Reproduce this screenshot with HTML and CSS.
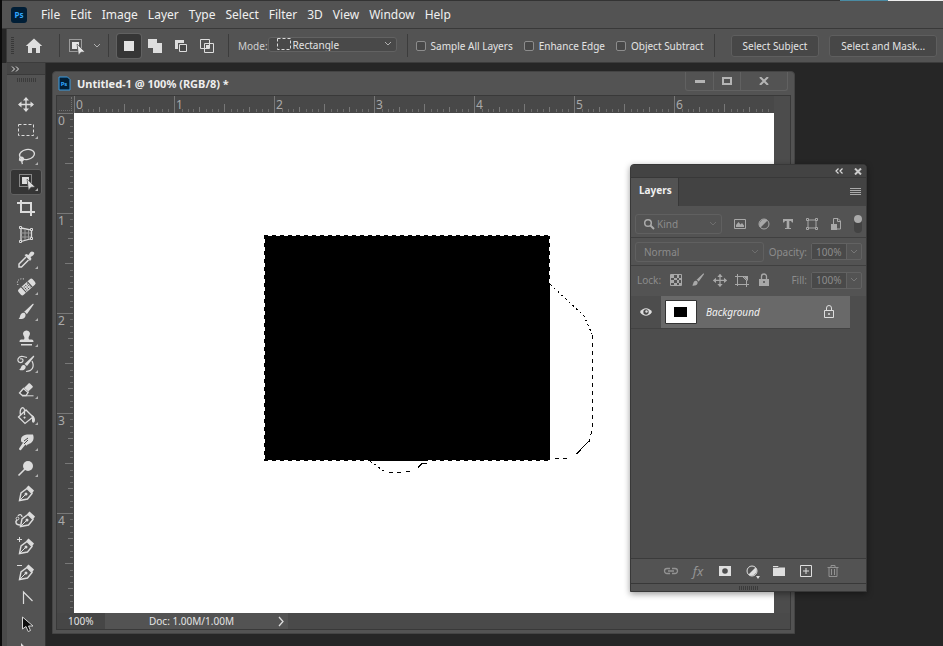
FILE: index.html
```html
<!DOCTYPE html>
<html lang="en">
<head>
<meta charset="utf-8">
<title>Untitled-1 @ 100% (RGB/8) *</title>
<link rel="stylesheet" href="styles.css">
</head>
<body>
<svg class="defs" aria-hidden="true">
  <defs>
    <symbol id="chev" viewBox="0 0 8 6"><path d="M1 1l3 3 3-3" fill="none" stroke="currentColor"/></symbol>
    <symbol id="objsel" viewBox="0 0 20 20">
      <path d="M2.500 3.500h12v12h-12z" fill="none" stroke="currentColor" stroke-dasharray="1 1"/>
      <path d="M5 6h7v5l-2-1v3H5z" fill="currentColor"/>
      <path d="M10 8l8 8-4 .2-2.500 3z" fill="currentColor" stroke="#484848" stroke-width=".6"/>
    </symbol>
    <symbol id="pen" viewBox="0 0 24 24">
      <path d="M5.500 18.500L7 11l6-4.500 5 5-4.500 5.500z" fill="none" stroke="currentColor" stroke-width="1.400"/>
      <path d="M12.500 5.500l2-2 5.500 5-2 3z" fill="currentColor"/>
      <path d="M5.500 18.500l6-6" stroke="currentColor"/><circle cx="12" cy="12" r="1.500" fill="currentColor"/>
    </symbol>
    <symbol id="brush" viewBox="0 0 24 24">
      <path d="M4.500 19c2-1 1-5 4-6 2-.6 3.500.8 3 3-.7 2.700-4 3.400-7 3z" fill="currentColor"/>
      <path d="M10 12l8.500-8c.8-.6 1.500 0 1 .8L12.800 14.200c-.5-1.200-1.500-2-2.800-2.200z" fill="currentColor"/>
    </symbol>
    <symbol id="move" viewBox="0 0 24 24">
      <path d="M12 6v13M5 12.500h14" stroke="currentColor" stroke-width="1.400"/>
      <path d="M12 5l3 3.500H9zM12 20l3-3.500H9zM4 12.500l3.500-3v6zM20 12.500l-3.500-3v6z" fill="currentColor"/>
    </symbol>
    <symbol id="ps" viewBox="0 0 16 16"><rect width="16" height="16" rx="3" fill="#001e36"/><text x="8" y="11" text-anchor="middle" class="ps-text">Ps</text></symbol>
  </defs>
</svg>

<div class="app">
  <header class="menubar">
    <svg class="ps-logo" aria-hidden="true"><use href="#ps"/></svg>
    <nav class="menus" aria-label="Main menu">
      <button>File</button><button>Edit</button><button>Image</button><button>Layer</button><button>Type</button><button>Select</button><button>Filter</button><button>3D</button><button>View</button><button>Window</button><button>Help</button>
    </nav>
    <span class="window-strip"></span>
  </header>

  <section class="options" aria-label="Tool options">
    <span class="grip-v"></span>
    <button class="home" aria-label="Home"><svg width="18" height="16" viewBox="0 0 18 16"><path d="M9 .5L.8 8H3v7h4v-5h4v5h4V8h2.200z" fill="#dedede"/></svg></button>
    <span class="sep"></span>
    <button class="preset" aria-label="Object selection presets"><svg width="20" height="20"><use href="#objsel"/></svg><svg class="preset-chev" width="8" height="6"><use href="#chev"/></svg></button>
    <span class="sep"></span>
    <div class="modes">
      <button class="mode on" aria-label="New selection"><svg width="16" height="16"><path d="M3 3h10v10H3z" fill="#e2e2e2"/></svg></button>
      <button class="mode" aria-label="Add to selection"><svg width="16" height="16"><path d="M1 1h9v4h5v10H6v-5H1z" fill="#dedede"/></svg></button>
      <button class="mode" aria-label="Subtract from selection"><svg width="16" height="16"><path d="M2 2h9v3H5v6H2z" fill="#dedede"/><path d="M6.500 6.500h7v7h-7z" fill="#484848" stroke="#dedede"/></svg></button>
      <button class="mode" aria-label="Intersect with selection"><svg width="16" height="16"><path d="M1.500 1.500h9v9h-9zM5.500 5.500h9v9h-9z" fill="none" stroke="#dedede"/><path d="M7 7h3v3H7z" fill="#dedede"/></svg></button>
    </div>
    <span class="sep"></span>
    <label class="mode-label" for="mode">Mode:</label>
    <span class="select shape-select">
      <svg class="shape-icon" width="16" height="14"><path d="M1.500 1.500h13v11h-13z" fill="none" stroke="#dcdcdc" stroke-dasharray="3 2"/></svg>
      <select id="mode"><option>Rectangle</option><option>Lasso</option></select>
      <svg class="select-chev" width="8" height="6"><use href="#chev"/></svg>
    </span>
    <span class="sep"></span>
    <div class="checks">
      <label><input type="checkbox">Sample All Layers</label>
      <label><input type="checkbox">Enhance Edge</label>
      <label><input type="checkbox">Object Subtract</label>
    </div>
    <span class="sep"></span>
    <div class="actions"><button>Select Subject</button><button>Select and Mask...</button></div>
  </section>

  <div class="work">
    <aside class="toolbar" aria-label="Tools">
      <button class="expand" aria-label="Expand tools"><svg width="9" height="6"><path d="M1 .5L3.500 3 1 5.500M5 .5L7.500 3 5 5.500" fill="none" stroke="#e0e0e0"/></svg></button>
      <div class="grip-row"><span class="grip-h"></span></div>
      <div class="tools">
        <button aria-label="Move"><svg><use href="#move"/></svg></button>
        <button class="more" aria-label="Rectangular marquee"><svg viewBox="0 0 24 24"><path d="M4.500 6.500h15v11h-15z" fill="none" stroke="currentColor" stroke-dasharray="3 2"/></svg></button>
        <button class="more" aria-label="Lasso"><svg viewBox="0 0 24 24"><g fill="none" stroke="currentColor" stroke-width="1.400"><ellipse cx="13" cy="10.500" rx="7.500" ry="5" transform="rotate(-10 13 10.500)"/><circle cx="7.500" cy="15" r="1.800"/><path d="M7.500 14c2 2-1 3 1 6M5 15.500c1.500.5 3 .5 4.500-.5"/></g></svg></button>
        <button class="more active" aria-label="Object selection"><svg viewBox="-3 -1 24 24"><use href="#objsel" width="20" height="20"/></svg></button>
        <button aria-label="Crop"><svg viewBox="0 0 24 24"><path d="M3 7h14v13M7 4v12h14" fill="none" stroke="currentColor" stroke-width="2"/></svg></button>
        <button aria-label="Perspective crop"><svg viewBox="0 0 24 24"><path d="M7 6l10.500 2v8.500L7 19.500z" fill="none" stroke="currentColor" stroke-width="1.300"/><path d="M11 7v11M14.500 8v9M7 11h10M7 15h10" fill="none" stroke="#9a9a9a"/><path d="M5.500 4.500h2v2h-2zM16.500 6.500h2v2h-2zM16.500 15.500h2v2h-2zM5.500 18.500h2v2h-2z" fill="#505050" stroke="currentColor"/></svg></button>
        <button class="more" aria-label="Eyedropper"><svg viewBox="0 0 24 24"><path d="M12 9l-7 7v3h2.500l7-7" fill="none" stroke="currentColor" stroke-width="1.500"/><path d="M10.500 7l2-1 2 1c2-4 3.500-4 5-3s1 3-3 5l1 2-1.500 2z" fill="currentColor"/></svg></button>
        <button class="more" aria-label="Spot healing brush"><svg viewBox="0 0 24 24"><g transform="rotate(-42 13 12.500)"><rect x="3" y="9" width="19" height="7.500" rx="2" fill="currentColor"/><path d="M8.500 9v7.500M16.500 9v7.500" stroke="#484848"/><path d="M10 11h5.500M10 13h5.500M10 15h5.500" stroke="#484848" stroke-width="1.100" stroke-dasharray="1.100 1.100"/></g><path d="M4 11C2 7 5 4 10 5" fill="none" stroke="currentColor" stroke-dasharray="1 1.500"/></svg></button>
        <button class="more" aria-label="Brush"><svg><use href="#brush"/></svg></button>
        <button class="more" aria-label="Clone stamp"><svg viewBox="0 0 24 24"><path d="M12.500 4.500a3.300 3.300 0 0 1 3 5c-1 1.500-1.200 2.500-.5 4h2.500c1.300 0 2 .8 2 2.500h-14c0-1.700.7-2.500 2-2.500H10c.8-1.500.4-2.500-.5-4a3.300 3.300 0 0 1 3-5zM7 18h11v1.500H7z" fill="currentColor"/></svg></button>
        <button class="more" aria-label="History brush"><svg viewBox="0 0 24 24"><path d="M5 17.500c2.500-.5 1.500-3.500 4-4.500 1.800-.4 3.300 1 2.500 3-1 2.500-4 3-6.500 1.500zM10.500 12l8.500-8c1.200-.5 1.500.5 1 1l-7 9z" fill="currentColor"/><path d="M9 4.500c-5-1-7 5-3 6 4 .5 4-5 0-3.500M18 9c3 6 0 10-6 10.500M9 4.500l4 1" fill="none" stroke="currentColor" stroke-width="1.200"/></svg></button>
        <button class="more" aria-label="Eraser"><svg viewBox="0 0 24 24"><path d="M10 17.500l8.500-8c.5-.5.500-1 0-1.500L16 5.500c-.5-.5-1-.5-1.500 0L10 10l5 4z" fill="currentColor"/><path d="M9.500 10.500l4.500 4-2 3H8.500L5.500 15z" fill="#484848" stroke="currentColor" stroke-width="1.300"/><path d="M8 17.800h11.500" stroke="currentColor"/></svg></button>
        <button class="more" aria-label="Paint bucket"><svg viewBox="0 0 24 24"><path d="M4.500 13l7.500-7 7 7-8 6.500zM6.500 11.500C5 3 10 2 10.500 6v5" fill="none" stroke="currentColor" stroke-width="1.300"/><path d="M10.500 12.500a1 1 0 1 0 .1 0M17 10.500l2.500 1.500c1.500 2 2 4 1 6-1 1.500-2.500.5-2.500-1v-4z" fill="currentColor"/></svg></button>
        <button class="more" aria-label="Smudge"><svg viewBox="0 0 24 24"><path d="M7 10c0-4 3-5 6-5.500h6c1.500 4 0 7-2 8.500-1 1-4 1-4.500 3l-1-1.500L7 20c-1 .8-2.500-.5-1.800-1.700L9.500 12c-1.500 1-2.500 0-2.500-2z" fill="currentColor"/><path d="M10 11l4-3M10 14l4-4" stroke="#484848"/></svg></button>
        <button class="more" aria-label="Dodge"><svg viewBox="0 0 24 24"><circle cx="14" cy="10" r="5" fill="currentColor"/><path d="M4.500 19.500l7-7" stroke="currentColor" stroke-width="1.600"/></svg></button>
        <button aria-label="Pen"><svg><use href="#pen"/></svg></button>
        <button aria-label="Curvature pen"><svg viewBox="0 0 24 24"><use href="#pen" x="1" width="24" height="24"/><path d="M6 17c-5 0-5-4-2-6M4 8c1-2 4-2 4 1" fill="none" stroke="currentColor" stroke-width="1.300"/><circle cx="3.500" cy="10.500" r="1.400" fill="#484848" stroke="currentColor"/></svg></button>
        <button aria-label="Add anchor point"><svg viewBox="0 0 24 24"><use href="#pen" y="1" width="24" height="24"/><path d="M3 5.500h5M5.500 3v5" stroke="currentColor"/></svg></button>
        <button aria-label="Delete anchor point"><svg viewBox="0 0 24 24"><use href="#pen" y="1" width="24" height="24"/><path d="M3 5.500h5" stroke="currentColor"/></svg></button>
        <button aria-label="Convert point"><svg viewBox="0 0 24 24"><path d="M9.500 18V6l9 9" fill="none" stroke="currentColor" stroke-width="1.200"/></svg></button>
        <button aria-label="Path selection"><svg viewBox="0 0 24 24"><path d="M8.500 5v12l3.500-2.500 2.200 5 2.300-1-2-4.500h4.500z" fill="#0c0c0c" stroke="#d6d6d6"/></svg></button>
        <button aria-label="Direct selection"><svg viewBox="0 0 24 24"><path d="M7 5v12l3.500-3h5z" fill="currentColor"/></svg></button>
      </div>
    </aside>

    <main class="desktop">
      <article class="doc">
        <header class="titlebar">
          <svg class="doc-icon" width="13" height="15" viewBox="0 0 13 15" aria-hidden="true"><path d="M1 1h8.500L12 3.500V14H1z" fill="#001e36" stroke="#3a9be0"/><text x="6" y="10" text-anchor="middle" class="ps-text small">Ps</text></svg>
          <h1>Untitled-1 @ 100% (RGB/8) *</h1>
          <div class="controls">
            <button aria-label="Minimize"><svg width="10" height="4"><path d="M0 1h10v3H0z" fill="#b4b4b4"/></svg></button>
            <button aria-label="Maximize"><svg width="10" height="8"><path d="M1 1h8v6H1z" fill="none" stroke="#b4b4b4" stroke-width="2"/></svg></button>
            <button class="close" aria-label="Close"><svg width="10" height="8"><path d="M1 0l8 8M9 0L1 8" stroke="#b4b4b4" stroke-width="2"/></svg></button>
          </div>
        </header>
        <div class="view">
          <div class="corner"></div>
          <div class="ruler-x">
            <svg aria-hidden="true"><defs><pattern id="tx" width="100" height="17" patternUnits="userSpaceOnUse"><path d="M.5 0v17" stroke="#777"/><path d="M50.500 8v8" stroke="#777"/><path d="M25.500 11v5M75.500 11v5" stroke="#777"/><path d="M8.500 13v3M14.500 13v3M19.500 13v3M32.500 13v3M38.500 13v3M44.500 13v3M57.500 13v3M63.500 13v3M69.500 13v3M82.500 13v3M88.500 13v3M94.500 13v3" stroke="#6c6c6c"/></pattern></defs><rect width="700" height="17" fill="url(#tx)"/></svg>
            <span>0</span><span>1</span><span>2</span><span>3</span><span>4</span><span>5</span><span>6</span>
          </div>
          <div class="scroll"></div>
          <div class="ruler-y">
            <svg aria-hidden="true"><defs><pattern id="ty" width="17" height="100" patternUnits="userSpaceOnUse"><path d="M0 .5h16" stroke="#777"/><path d="M8 50.500h8" stroke="#777"/><path d="M11 25.500h5M11 75.500h5" stroke="#777"/><path d="M13 6.500h3M13 13.500h3M13 19.500h3M13 32.500h3M13 38.500h3M13 44.500h3M13 57.500h3M13 63.500h3M13 69.500h3M13 82.500h3M13 88.500h3M13 94.500h3" stroke="#6c6c6c"/></pattern></defs><rect width="17" height="500" fill="url(#ty)"/></svg>
            <span>0</span><span>1</span><span>2</span><span>3</span><span>4</span>
          </div>
          <svg class="canvas" width="700" height="500" viewBox="0 0 700 500" role="img" aria-label="Black rectangle with selection">
            <path d="M190 122h286v226H190z" fill="#000"/>
            <g fill="none" shape-rendering="crispEdges" stroke="#fff" stroke-dasharray="4 4">
              <path d="M194 122.500h282M190.500 126v221M475.500 126v45M194 347.500h102M354 347.500h122"/>
            </g>
            <g fill="none" shape-rendering="crispEdges" stroke="#000">
              <path d="M476.500 171.500L510 203l8 18" stroke-dasharray="2 3"/>
              <path d="M518.500 222v91l-3 16" stroke-dasharray="4 4"/>
              <path d="M514.500 328.500l-12 12.500M481 345.500h4M489 345.500h4"/>
              <path d="M296 348.500l4 2 6 5 5 3" stroke-dasharray="2 3"/>
              <path d="M315 359.500h4M323 359.500h4M332 358.500h4M344 354.500l4-4h5"/>
            </g>
          </svg>
          <div class="scroll"></div>
        </div>
        <footer class="status">
          <input class="zoom" value="100%" aria-label="Zoom">
          <div class="info"><span>Doc: 1.00M/1.00M</span><button aria-label="Document info"><svg width="7" height="11"><path d="M1 1l4 4.500L1 10" fill="none" stroke="#ddd" stroke-width="1.300"/></svg></button></div>
        </footer>
      </article>

      <section class="panel" aria-label="Layers">
        <div class="panel-head">
          <button aria-label="Collapse"><svg width="9" height="6"><path d="M3.500.5L1 3l2.500 2.500M7.500.5L5 3l2.500 2.500" fill="none" stroke="#ddd" stroke-width="1.200"/></svg></button>
          <button aria-label="Close panel"><svg width="8" height="7"><path d="M1 .5l6 6M7 .5l-6 6" stroke="#ccc" stroke-width="2"/></svg></button>
        </div>
        <div class="tabs"><h2>Layers</h2><button aria-label="Panel menu"><svg width="11" height="8"><path d="M0 .5h11M0 2.500h11M0 4.500h11M0 6.500h11" stroke="#aaa" shape-rendering="crispEdges"/></svg></button></div>
        <div class="row filter">
          <span class="select kind"><svg class="search" width="12" height="12"><circle cx="5" cy="5" r="3.300" fill="none" stroke="#aaa" stroke-width="1.500"/><path d="M7.500 7.500L11 11" stroke="#aaa" stroke-width="2"/></svg><select aria-label="Filter type"><option>Kind</option></select><svg class="select-chev" width="8" height="6"><use href="#chev"/></svg></span>
          <div class="filters">
            <button aria-label="Pixel layers"><svg viewBox="0 0 16 16"><path d="M2.500 3.500h11v9h-11z" fill="none" stroke="currentColor"/><path d="M4 11V9l2.500-3 2 2.500L10 7l2 2.500V11z" fill="currentColor"/></svg></button>
            <button aria-label="Adjustment layers"><svg viewBox="0 0 16 16"><circle cx="8" cy="8" r="5" fill="none" stroke="currentColor"/><path d="M4.500 11.500l7-7A5 5 0 0 0 4.500 11.500z" fill="currentColor"/></svg></button>
            <button aria-label="Type layers"><svg viewBox="0 0 16 16"><path d="M3 3h10v3.500h-1L11 5H9.300v7H11v1H5v-1h1.700V5H5L4 6.500H3z" fill="currentColor"/></svg></button>
            <button aria-label="Shape layers"><svg viewBox="0 0 16 16"><path d="M4 4h8v8H4z" fill="none" stroke="currentColor"/><path d="M2.500 2.500h2v2h-2zM11.500 2.500h2v2h-2zM2.500 11.500h2v2h-2zM11.500 11.500h2v2h-2z" fill="#505050" stroke="currentColor"/></svg></button>
            <button aria-label="Smart objects"><svg viewBox="0 0 16 16"><path d="M5.500 8V2.500H10L12.500 5v8H9M9.500 2.500V5.500h3" fill="none" stroke="currentColor"/><path d="M3 8h6v6H3z" fill="currentColor"/></svg></button>
          </div>
          <button class="toggle" aria-label="Filtering"></button>
        </div>
        <div class="row">
          <span class="select blend"><select aria-label="Blend mode"><option>Normal</option></select><svg class="select-chev" width="8" height="6"><use href="#chev"/></svg></span>
          <label class="field">Opacity:<span class="number"><input value="100%"><svg width="8" height="6"><use href="#chev"/></svg></span></label>
        </div>
        <div class="row locks">
          <span class="lock-label">Lock:</span>
          <div class="lock-icons">
            <button aria-label="Lock transparency"><svg viewBox="0 0 16 16"><path d="M2.500 2.500h11v11h-11z" fill="none" stroke="currentColor"/><path d="M3 3h3v3H3zM9 3h2v3H9zM6 6h3v2H6zM11 6h2v2h-2zM3 8h3v3H3zM9 8h2v3H9zM6 11h3v2H6zM11 11h2v2h-2z" fill="currentColor"/></svg></button>
            <button aria-label="Lock pixels"><svg viewBox="2 2 20 20"><use href="#brush" width="24" height="24"/></svg></button>
            <button aria-label="Lock position"><svg viewBox="3 3 18 18"><use href="#move" width="24" height="24"/></svg></button>
            <button aria-label="Lock artboard"><svg viewBox="0 0 16 16"><path d="M1 4.500h10.500M3.500 2v12M1 12.500h14M12.500 15V8M8.500 4.500l4 4" fill="none" stroke="currentColor"/><path d="M9 4l5 5V4z" fill="currentColor"/></svg></button>
            <button aria-label="Lock all"><svg viewBox="0 0 16 16"><path d="M5.500 7V4.500a2.500 2.500 0 0 1 5 0V7" fill="none" stroke="currentColor" stroke-width="1.300"/><path d="M3 7h10v7H3z" fill="currentColor"/><circle cx="8" cy="10" r="1" fill="#505050"/></svg></button>
          </div>
          <label class="field">Fill:<span class="number"><input value="100%"><svg width="8" height="6"><use href="#chev"/></svg></span></label>
        </div>
        <div class="layer-list">
          <div class="layer">
            <button class="eye" aria-label="Toggle visibility"><svg width="14" height="10"><path d="M1 5c3-5 9-5 12 0-3 5-9 5-12 0z" fill="#dedede"/><circle cx="7" cy="5" r="2.700" fill="#4a4a4a"/><circle cx="7.500" cy="4.500" r="1.200" fill="#dedede"/></svg></button>
            <div class="layer-body">
              <svg class="thumb" width="32" height="24"><path d="M.5.500h31v23H.5z" fill="#fff" stroke="#333"/><path d="M9 7h13v10H9z"/></svg>
              <span>Background</span>
              <svg class="lock" width="12" height="14"><path d="M1.500 5.500h9v7h-9zM3.500 5V3a2.500 2.500 0 0 1 5 0v2" fill="none" stroke="#dedede"/><circle cx="6" cy="9" r="1" fill="#dedede"/></svg>
            </div>
          </div>
        </div>
        <div class="panel-foot">
          <button class="dim" aria-label="Link layers"><svg viewBox="0 0 16 16"><path d="M7 10.500H4a2.500 2.500 0 0 1 0-5h3M9 5.500h3a2.500 2.500 0 0 1 0 5H9M5 8h6" fill="none" stroke="currentColor" stroke-width="1.300"/></svg></button>
          <button class="dim fx" aria-label="Layer style">fx</button>
          <button aria-label="Add mask"><svg viewBox="0 0 16 16"><path d="M2 3h12v10H2z" fill="currentColor"/><circle cx="8" cy="8" r="2.800" fill="#4d4d4d"/></svg></button>
          <button class="drop" aria-label="New adjustment layer"><svg viewBox="0 0 16 16"><circle cx="8" cy="8" r="5" fill="none" stroke="currentColor"/><path d="M4.500 11.500l7-7A5 5 0 0 1 4.500 11.500z" fill="currentColor"/></svg></button>
          <button aria-label="New group"><svg viewBox="0 0 16 16"><path d="M2 3h5l1 1.500h6V13H2z" fill="currentColor"/><path d="M2 4.500h6" stroke="#505050" stroke-width=".7"/></svg></button>
          <button aria-label="New layer"><svg viewBox="0 0 16 16"><path d="M2.500 2.500h11v11h-11zM8 5v6M5 8h6" fill="none" stroke="currentColor"/></svg></button>
          <button class="dim" aria-label="Delete layer"><svg viewBox="0 0 16 16"><path d="M2.500 4.500h11M6 4V2.500h4V4M4 4.500v9h8v-9M6.500 6v6M9.500 6v6" fill="none" stroke="currentColor"/></svg></button>
        </div>
        <div class="panel-grip"><span class="grip-h"></span></div>
      </section>
    </main>
  </div>
</div>
</body>
</html>
```
FILE: styles.css
```css
* { box-sizing: border-box; }
body {
  margin: 0;
  height: 100vh;
  overflow: hidden;
  background: #262626;
  color: #e4e4e4;
  font: 10px/14px "Noto Sans", "Open Sans", sans-serif;
}
button, input, select { font: inherit; color: inherit; }
button { padding: 0; border: 0; background: none; display: flex; align-items: center; justify-content: center; }
svg { display: block; flex: none; }
.defs { position: absolute; width: 0; height: 0; }
.ps-text { font: bold 8px "Noto Sans", sans-serif; fill: #31a8ff; }
.ps-text.small { font-size: 6px; }

.app { height: 100%; display: flex; flex-direction: column; border-left: 2px solid #0b0b0b; }

/* Menu bar */
.menubar {
  position: relative;
  flex: none;
  height: 29px;
  display: flex;
  align-items: center;
  gap: 14px;
  padding-left: 9px;
  background: #535353;
  border-top: 1px solid #333;
  border-bottom: 1px solid #393939;
}
.ps-logo { width: 16px; height: 16px; }
.menus { display: flex; gap: 10px; }
.menus button { font-size: 12px; line-height: 18px; color: #f0f0f0; }
.window-strip { position: absolute; top: -1px; right: 0; width: 103px; height: 1px; background: linear-gradient(to right, #4a8ba3 48px, #eee 48px); }

/* Options bar */
.options {
  flex: none;
  height: 34px;
  margin-left: 4px;
  display: flex;
  align-items: center;
  background: #535353;
  border-left: 1px solid #393939;
  border-bottom: 1px solid #3c3c3c;
  white-space: nowrap;
}
.grip-v { width: 3px; height: 18px; margin-left: 4px; background: repeating-linear-gradient(#383838 0 1px, transparent 1px 2px); }
.home { width: 18px; margin: 0 16px 0 11px; }
.sep { flex: none; width: 1px; height: 23px; background: #3c3c3c; }
.preset { gap: 6px; margin: 0 7px 0 7px; }
.preset-chev { color: #b0b0b0; }
.modes { display: flex; gap: 2px; padding: 0 9px 0 8px; }
.mode { width: 24px; height: 24px; }
.mode.on { background: #363636; border-radius: 3px; box-shadow: 0 0 0 1px #616161; }
.mode-label { margin: 0 0 0 9px; color: #d0d0d0; }
.select {
  position: relative;
  display: flex;
  align-items: center;
  border: 1px solid #626262;
  border-radius: 3px;
  background: #494949;
}
.select select { appearance: none; width: 100%; height: 100%; padding: 0 16px 0 8px; border: 0; background: none; }
.select-chev { position: absolute; right: 4px; pointer-events: none; color: #b0b0b0; }
.shape-select { width: 129px; height: 15px; margin: 0 10px 3px 0; }
.shape-select select { padding-left: 24px; }
.shape-icon { position: absolute; left: 7px; pointer-events: none; }
.checks { display: flex; gap: 11px; margin: 0 10px 0 8px; }
.checks label { display: flex; align-items: center; gap: 5px; }
.checks input { appearance: none; width: 10px; height: 10px; margin: 0; border: 1px solid #8c8c8c; border-radius: 2px; background: #474747; }
.actions { display: flex; gap: 10px; margin-left: 16px; }
.actions button { height: 22px; padding: 0 11px; border: 1px solid #5e5e5e; border-radius: 3px; background: #474747; }

.work { flex: 1; min-height: 0; display: flex; }

/* Tool column */
.toolbar {
  flex: none;
  width: 44px;
  overflow: hidden;
  border-left: 5px solid #4a4a4a;
  border-right: 1px solid #333;
  background: #535353;
}
.expand { width: 100%; height: 12px; padding-left: 4px; justify-content: flex-start; background: #464646; border-bottom: 1px solid #3a3a3a; }
.grip-row { height: 16px; padding-top: 3px; display: flex; justify-content: center; }
.grip-h { width: 19px; height: 4px; background: repeating-linear-gradient(to right, #3b3b3b 0 1px, transparent 1px 2px); }
.tools { display: flex; flex-direction: column; align-items: center; color: #dcdcdc; }
.tools button { position: relative; flex: none; width: 32px; height: 26px; border: 1px solid transparent; border-radius: 3px; }
.tools svg { width: 24px; height: 24px; }
.tools .active { background: #353535; border-color: #616161; }
.more::after, .drop::after { content: ""; position: absolute; right: 3px; bottom: 3px; border-left: 3px solid transparent; border-bottom: 3px solid #b0b0b0; }

.desktop { position: relative; flex: 1; min-width: 0; overflow: hidden; }

/* Floating document window */
.doc {
  position: absolute;
  left: 6px;
  top: 8px;
  padding: 0 3px 3px;
  border: 1px solid #444;
  border-radius: 4px 4px 0 0;
  background: #535353;
}
.titlebar { height: 23px; display: flex; align-items: center; padding-left: 2px; }
.titlebar h1 { flex: 1; margin: 0 0 0 6px; font-size: 11px; line-height: 16px; color: #eee; }
.controls { display: flex; align-self: flex-start; height: 19px; margin-right: 3px; border: 1px solid #616161; border-top: 0; border-radius: 0 0 3px 3px; }
.controls button { width: 27px; }
.controls button + button { border-left: 1px solid #616161; }
.controls .close { width: 47px; }
.view { display: grid; grid-template-columns: 17px 700px 16px; grid-template-rows: 17px 500px; background: #484848; border: 1px solid #393939; border-bottom: 0; }
.corner { margin: 1px 2px 2px 2px; border-right: 1px dotted #707070; border-bottom: 1px dotted #707070; }
.ruler-x, .ruler-y { position: relative; display: flex; overflow: hidden; font-size: 12px; line-height: 16px; color: #aaa; }
.ruler-x svg, .ruler-y svg { position: absolute; left: 0; top: 0; width: 100%; height: 100%; shape-rendering: crispEdges; }
.ruler-x span { flex: 0 0 100px; padding: 1px 0 0 2px; }
.ruler-y { flex-direction: column; }
.ruler-y span { flex: 0 0 100px; padding-left: 1px; }
.canvas { background: #fff; }
.scroll { background: #4c4c4c; }
.status { height: 17px; display: flex; border: 1px solid #393939; border-top: 0; background: #4a4a4a; }
.zoom { width: 48px; padding: 0 0 0 11px; border: 0; background: #464646; }
.info { display: flex; align-items: center; width: 183px; padding-left: 44px; background: #535353; }
.info button { margin: 0 3px 0 auto; }

/* Layers panel */
.panel {
  position: absolute;
  left: 584px;
  top: 101px;
  width: 237px;
  border: 1px solid #383838;
  border-radius: 4px 4px 0 0;
  background: #535353;
  box-shadow: 0 2px 6px #0006;
  color: #8c8c8c;
}
.panel-head { height: 13px; display: flex; justify-content: flex-end; align-items: center; gap: 10px; padding-right: 4px; background: #434343; border-bottom: 1px solid #383838; border-radius: 4px 4px 0 0; }
.tabs { height: 28px; display: flex; justify-content: space-between; background: #434343; }
.tabs h2 { margin: 0; padding: 5px 6px 0 8px; font-size: 10px; line-height: 14px; color: #f0f0f0; background: #535353; border-right: 1px solid #383838; }
.tabs button { margin-right: 5px; }
.row { height: 28px; display: flex; align-items: center; justify-content: space-between; padding: 0 4px; border-bottom: 1px solid #404040; }
.row.filter { height: 32px; padding-top: 5px; }
.row.locks { height: 30px; padding-bottom: 2px; border-bottom: 0; }
.kind { width: 87px; height: 20px; background: none; border-color: #606060; }
.kind select { padding-left: 21px; }
.kind .search { position: absolute; left: 7px; }
.kind .select-chev, .blend .select-chev { color: #6e6e6e; }
.filters { display: flex; gap: 8px; color: #a8a8a8; }
.filters svg, .lock-icons svg { width: 16px; height: 16px; }
.toggle { width: 8px; height: 18px; align-items: flex-start; border-radius: 4px; background: #434343; }
.toggle::before { content: ""; width: 8px; height: 8px; border-radius: 50%; background: #aaa; }
.blend { width: 129px; height: 20px; background: none; border-color: #606060; }
.field { display: flex; align-items: center; gap: 4px; }
.number { display: flex; align-items: center; width: 51px; height: 17px; border: 1px solid #626262; border-radius: 2px; }
.number input { width: 35px; height: 100%; padding: 0 0 0 4px; border: 0; border-right: 1px solid #626262; background: #494949; }
.number svg { margin-left: 3px; color: #777; }
.lock-label { margin-left: 2px; }
.lock-icons { display: flex; gap: 6px; margin-right: 13px; color: #a8a8a8; }
.layer-list { min-height: 263px; background: #4d4d4d; border-bottom: 1px solid #3b3b3b; }
.layer { display: flex; height: 33px; margin-right: 16px; border-bottom: 1px solid #424242; }
.eye { width: 30px; background: #4d4d4d; }
.layer-body { flex: 1; display: flex; align-items: center; padding: 0 15px 0 4px; background: #696969; color: #f2f2f2; }
.layer-body span { flex: 1; padding-left: 9px; font-style: italic; }
.panel-foot { height: 25px; display: flex; align-items: center; justify-content: center; gap: 11px; padding-left: 7px; color: #dedede; border-bottom: 1px solid #383838; }
.panel-foot button { position: relative; width: 16px; height: 16px; }
.panel-foot svg { width: 16px; height: 16px; }
.panel-foot .dim { color: #939393; }
.panel-foot .fx { font-size: 13px; font-style: italic; }
.drop::after { right: 0; bottom: 0; border-left: 2px solid transparent; border-right: 2px solid transparent; border-bottom: 0; border-top: 3px solid #ddd; }
.panel-grip { height: 7px; display: flex; justify-content: center; align-items: center; }
```
